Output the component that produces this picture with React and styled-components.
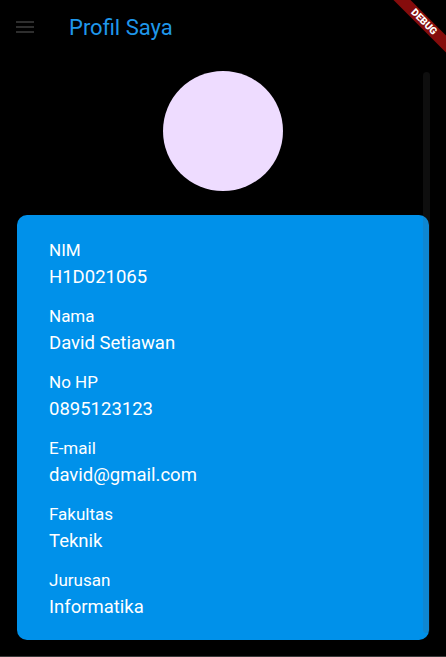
import React from "react";
import styled, { createGlobalStyle } from "styled-components";

const GlobalStyle = createGlobalStyle`
  html, body {
    margin: 0;
    padding: 0;
    background: #000;
  }
  body {
    font-family: Roboto, "Noto Sans", "Liberation Sans", sans-serif;
  }
`;

const Screen = styled.div`
  position: relative;
  width: 446px;
  height: 657px;
  box-sizing: border-box;
  background: #000;
  border-bottom: 1px solid #3a3a3a;
  overflow: hidden;
`;

const AppBar = styled.header`
  display: flex;
  align-items: flex-start;
  height: 56px;
`;

const MenuButton = styled.div`
  width: 24px;
  height: 24px;
  margin: 15px 0 0 13px;
  color: #2e2e2e;
`;

const Title = styled.h1`
  margin: 14px 0 0 32px;
  font-size: 22px;
  line-height: 28px;
  font-weight: 400;
  color: #1f97ea;
`;

const Body = styled.main`
  display: flex;
  flex-direction: column;
  align-items: center;
  padding: 15px 17px 0;
`;

const Avatar = styled.div`
  width: 120px;
  height: 120px;
  border-radius: 50%;
  background: #eedcff;
`;

const Card = styled.section`
  align-self: stretch;
  margin-top: 24px;
  padding: 25px 32px 21px;
  border-radius: 10px;
  background: #0091ea;
  display: flex;
  flex-direction: column;
  gap: 17px;
`;

const Field = styled.div`
  display: flex;
  flex-direction: column;
  gap: 5px;
  color: #fff;
`;

const Label = styled.span`
  font-size: 17px;
  line-height: 20px;
`;

const Value = styled.span`
  font-size: 18.5px;
  line-height: 24px;
`;

const ScrollThumb = styled.div`
  position: absolute;
  left: 423px;
  top: 72px;
  width: 7px;
  height: 561px;
  border-radius: 4px;
  background: rgba(90, 90, 90, 0.16);
`;

const DebugBanner = styled.div`
  position: absolute;
  left: 384px;
  top: 16px;
  width: 80px;
  height: 12px;
  transform: rotate(45deg);
  background: #850c0c;
  color: #fff;
  font-size: 10px;
  font-weight: 900;
  line-height: 12px;
  text-align: center;
`;

const MenuIcon = () => (
  <svg width="24" height="24" viewBox="0 0 24 24" fill="currentColor">
    <rect x="3" y="6" width="18" height="2" />
    <rect x="3" y="11" width="18" height="2" />
    <rect x="3" y="16" width="18" height="2" />
  </svg>
);

const profile = [
  ["NIM", "H1D021065"],
  ["Nama", "David Setiawan"],
  ["No HP", "0895123123"],
  ["E-mail", "david@gmail.com"],
  ["Fakultas", "Teknik"],
  ["Jurusan", "Informatika"],
];

export default function App() {
  return (
    <Screen>
      <GlobalStyle />
      <AppBar>
        <MenuButton>
          <MenuIcon />
        </MenuButton>
        <Title>Profil Saya</Title>
      </AppBar>
      <Body>
        <Avatar />
        <Card>
          {profile.map(([label, value]) => (
            <Field key={label}>
              <Label>{label}</Label>
              <Value>{value}</Value>
            </Field>
          ))}
        </Card>
      </Body>
      <ScrollThumb />
      <DebugBanner>DEBUG</DebugBanner>
    </Screen>
  );
}
